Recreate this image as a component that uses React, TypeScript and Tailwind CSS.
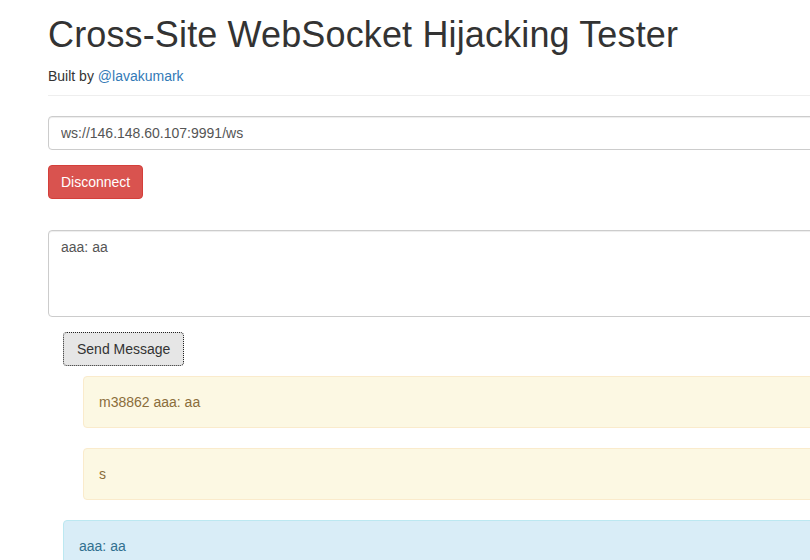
import React, { useState } from 'react';

const App: React.FC = () => {
  const [url, setUrl] = useState('ws://146.148.60.107:9991/ws');
  const [message, setMessage] = useState('aaa: aa');

  const received = ['m38862 aaa: aa', 's'];
  const sent = ['aaa: aa'];

  return (
    <div className="h-[560px] w-[810px] overflow-hidden bg-white font-['Liberation_Sans',Arial,sans-serif] text-[14px] leading-5 text-[#333]">
      <div className="ml-[48px] w-[1100px]">
        <div className="mb-5 border-b border-[#eee] pb-[9px]">
          <h1 className="mt-[15px] mb-[11px] text-[36px] font-normal leading-[1.1] tracking-[0.14px]">
            Cross-Site WebSocket Hijacking Tester
          </h1>
          <p>
            Built by <a className="text-[#337ab7]">@lavakumark</a>
          </p>
        </div>

        <input
          value={url}
          onChange={e => setUrl(e.target.value)}
          className="block h-[34px] w-full rounded-[4px] border border-[#ccc] px-3 py-[6px] text-[14px] text-[#555] shadow-[inset_0_1px_1px_rgba(0,0,0,0.075)] outline-none"
        />

        <div className="mt-[15px]">
          <button className="h-[34px] rounded-[4px] border border-[#d43f3a] bg-[#d9534f] px-3 text-[14px] leading-5 text-white">
            Disconnect
          </button>
        </div>

        <textarea
          value={message}
          onChange={e => setMessage(e.target.value)}
          className="mt-[31px] block h-[87px] w-full resize-none rounded-[4px] border border-[#ccc] px-3 py-[6px] text-[14px] leading-5 text-[#555] shadow-[inset_0_1px_1px_rgba(0,0,0,0.075)] outline-none"
        />

        <div className="mt-[15px] pl-[15px]">
          <button className="h-[34px] rounded-[4px] border border-dotted border-[#222] bg-[#e6e6e6] px-[13px] text-[14px] leading-5 text-[#333]">
            Send Message
          </button>
        </div>

        <div className="mt-[10px] ml-[35px]">
          {received.map((m, i) => (
            <div
              key={i}
              className="mb-5 rounded-[4px] border border-[#faebcc] bg-[#fcf8e3] p-[15px] text-[#8a6d3b]"
            >
              {m}
            </div>
          ))}
        </div>

        <div className="ml-[15px]">
          {sent.map((m, i) => (
            <div
              key={i}
              className="mb-5 rounded-[4px] border border-[#bce8f1] bg-[#d9edf7] p-[15px] text-[#31708f]"
            >
              {m}
            </div>
          ))}
        </div>
      </div>
    </div>
  );
};

export default App;
